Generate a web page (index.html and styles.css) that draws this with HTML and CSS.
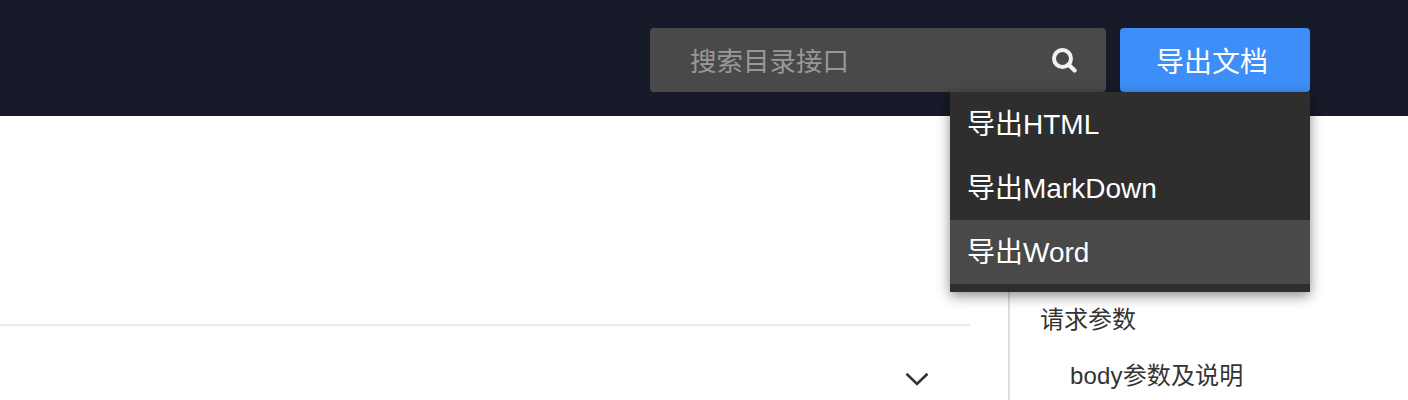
FILE: index.html
```html
<!DOCTYPE html>
<html lang="zh-CN">
<head>
<meta charset="utf-8">
<title>导出文档</title>
<link rel="stylesheet" href="styles.css">
</head>
<body>
<header class="topbar">
  <div class="search">
    <span class="search-text">搜索目录接口</span>
    <svg class="search-icon" viewBox="0 0 26 26" aria-hidden="true"><circle cx="11.5" cy="11.5" r="8.5" fill="none" stroke="#f2f2f2" stroke-width="4"/><path d="M18 18 L23.6 23.6" stroke="#f2f2f2" stroke-width="4.2" stroke-linecap="round"/></svg>
  </div>
  <div class="export">
    <button class="export-btn">导出文档</button>
    <ul class="menu">
      <li class="menu-item">导出HTML</li>
      <li class="menu-item">导出MarkDown</li>
      <li class="menu-item active">导出Word</li>
    </ul>
  </div>
</header>
<div class="content">
  <main class="main">
    <div class="rule"></div>
    <div class="row">
      <svg class="chevron" viewBox="0 0 24 14" aria-hidden="true"><path d="M1.5 1.8 L12 12 L22.5 1.8" fill="none" stroke="#333" stroke-width="2.6"/></svg>
    </div>
  </main>
  <aside class="toc">
    <div class="toc-item">请求参数</div>
    <div class="toc-item sub">body参数及说明</div>
  </aside>
</div>
</body>
</html>
```
FILE: styles.css
```css
* { box-sizing: border-box; }
html, body { margin: 0; height: 400px; overflow: hidden; background: #fff; }
body { font-family: "Liberation Sans", "Noto Sans CJK SC", sans-serif; }
.topbar {
  height: 116px;
  background: #161a29;
  display: flex;
  justify-content: flex-end;
  align-items: flex-start;
  padding: 28px 98px 0 0;
  gap: 14px;
}
.search {
  width: 456px;
  height: 64px;
  background: #494949;
  border-radius: 4px;
  display: flex;
  align-items: center;
  justify-content: space-between;
  padding: 0 29px 2px 40px;
}
.search-text { font-size: 26.5px; color: #989898; }
.search-icon { width: 26px; height: 26px; position: relative; top: 1px; }
.export { position: relative; width: 190px; }
.export-btn {
  display: block;
  width: 190px;
  height: 64px;
  border: 0;
  border-radius: 4px;
  background: #3d8ef8;
  color: #fff;
  font: inherit;
  font-size: 28px;
  padding: 0 6px 0 0;
}
.menu {
  position: absolute;
  top: 64px;
  right: 0;
  width: 360px;
  margin: 0;
  padding: 0 0 8px;
  list-style: none;
  background: #2e2e2e;
  box-shadow: 0 4px 12px rgba(0, 0, 0, 0.45);
  z-index: 2;
}
.menu-item {
  height: 64px;
  line-height: 66px;
  padding-left: 17px;
  font-size: 28px;
  color: #fff;
}
.menu-item.active { background: #494949; }
.content { display: flex; height: 284px; }
.main { width: 970px; padding-top: 208px; }
.rule { height: 2px; background: #ebebeb; }
.row { display: flex; justify-content: flex-end; padding: 46px 41px 0 0; }
.chevron { width: 24px; height: 14px; display: block; }
.toc {
  margin-left: 38px;
  flex: 1;
  border-left: 2px solid #dedede;
  padding: 188px 0 0 30px;
  color: #333;
  font-size: 24px;
}
.toc-item { height: 56px; line-height: 32px; }
.toc-item.sub { padding-left: 30px; letter-spacing: 0.15px; }
```
